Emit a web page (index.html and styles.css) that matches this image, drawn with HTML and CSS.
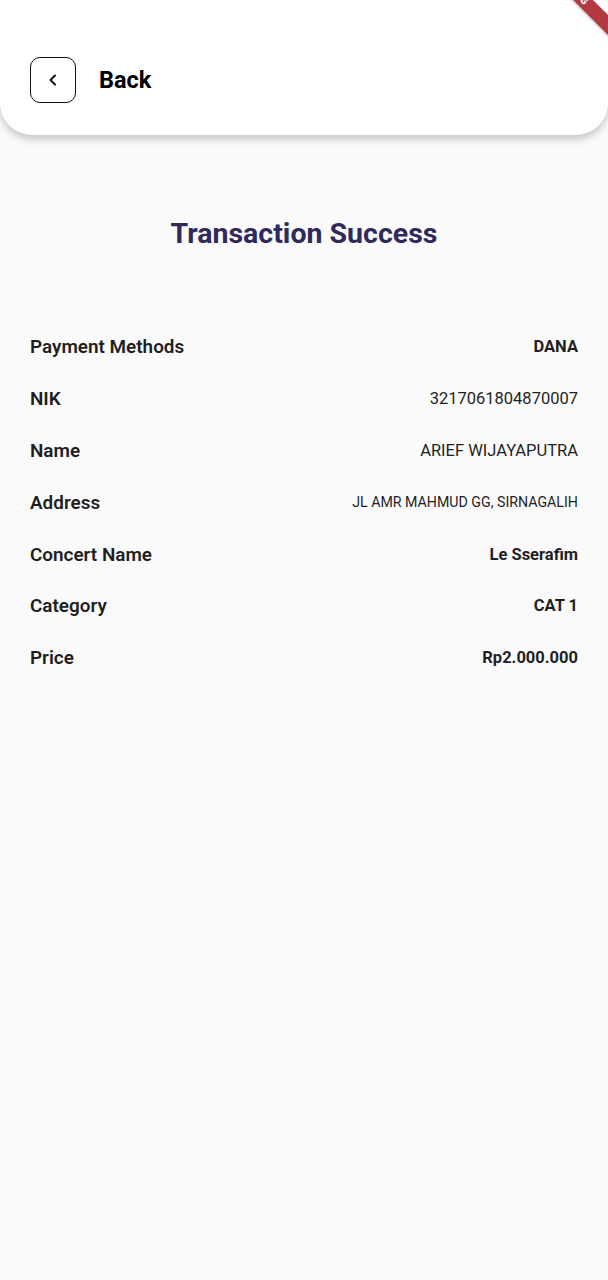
FILE: index.html
```html
<!DOCTYPE html>
<html>
<head>
<meta charset="utf-8">
<link rel="stylesheet" href="styles.css">
</head>
<body>
<div class="app">
  <header class="topbar">
    <button class="back-btn" aria-label="Back">
      <svg width="16" height="16" viewBox="0 0 16 16"><path d="M10 3.5 L5.5 8 L10 12.5" fill="none" stroke="#111" stroke-width="2" stroke-linecap="round" stroke-linejoin="round"/></svg>
    </button>
    <span class="back-label">Back</span>
  </header>

  <h1 class="title">Transaction Success</h1>

  <section class="details">
    <div class="row"><span class="label">Payment Methods</span><span class="value bold">DANA</span></div>
    <div class="row"><span class="label">NIK</span><span class="value">3217061804870007</span></div>
    <div class="row"><span class="label">Name</span><span class="value">ARIEF WIJAYAPUTRA</span></div>
    <div class="row"><span class="label">Address</span><span class="value small">JL AMR MAHMUD GG, SIRNAGALIH</span></div>
    <div class="row"><span class="label">Concert Name</span><span class="value bold">Le Sserafim</span></div>
    <div class="row"><span class="label">Category</span><span class="value bold">CAT 1</span></div>
    <div class="row"><span class="label">Price</span><span class="value bold">Rp2.000.000</span></div>
  </section>

  <div class="debug-banner">DEBUG</div>
</div>
</body>
</html>
```
FILE: styles.css
```css
* { box-sizing: border-box; }
html, body {
  margin: 0;
  padding: 0;
  background: #fafafa;
  font-family: Roboto, "Noto Sans", sans-serif;
  color: #1f1f1f;
}
.app {
  position: relative;
  width: 608px;
  min-height: 1280px;
  overflow: hidden;
}
.topbar {
  display: flex;
  align-items: center;
  gap: 23px;
  padding: 57px 30px 32px;
  background: #ffffff;
  border-radius: 0 0 32px 32px;
  box-shadow: 0 4px 8px rgba(0, 0, 0, 0.22);
}
.back-btn {
  width: 46px;
  height: 46px;
  display: flex;
  align-items: center;
  justify-content: center;
  background: transparent;
  border: 1.5px solid #111;
  border-radius: 10px;
  padding: 0;
}
.back-label {
  font-size: 23.5px;
  font-weight: 700;
  color: #000;
}
.title {
  margin: 82px 0 0;
  text-align: center;
  font-size: 28.5px;
  line-height: 34px;
  font-weight: 700;
  color: #2e2b5c;
}
.details {
  margin-top: 70px;
  padding: 0 30px;
}
.row {
  height: 51.8px;
  display: flex;
  align-items: center;
  justify-content: space-between;
}
.label {
  font-size: 18.9px;
  font-weight: 600;
  color: #1f1f1f;
}
.value {
  font-size: 16.5px;
  font-weight: 400;
  color: #1f1f1f;
}
.value.bold { font-weight: 700; }
.value.small { font-size: 14.2px; }
.debug-banner {
  position: absolute;
  left: 505px;
  top: -15px;
  width: 140px;
  height: 14px;
  transform: rotate(45deg);
  background: #b23a40;
  box-shadow: 0 1px 3px rgba(0, 0, 0, 0.25);
  color: #fff;
  font-size: 10px;
  line-height: 14px;
  font-weight: 900;
  text-align: center;
}
```
